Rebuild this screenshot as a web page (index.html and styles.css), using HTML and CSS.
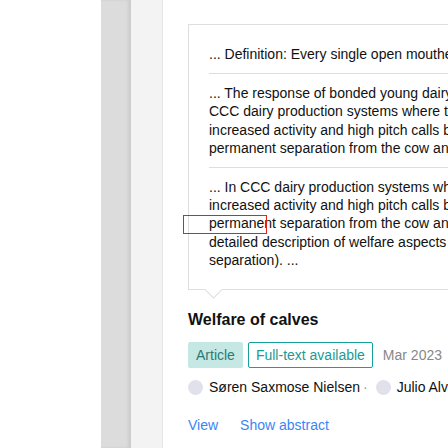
FILE: index.html
```html
<!DOCTYPE html>
<html>
<head>
<meta charset="utf-8">
<link rel="stylesheet" href="styles.css">
</head>
<body>
<div class="page">
  <div class="blank"></div>
  <div class="rail"></div>
  <div class="side"></div>
  <main class="main">
    <div class="card">
      <div class="snippet">... Definition: Every single open mouthed vocalization</div>
      <div class="snippet">... The response of bonded young dairy calves to separation in<br>CCC dairy production systems where the calf shows<br>increased activity and high pitch calls before and after<br>permanent separation from the cow and herd mates ...</div>
      <div class="snippet">... In CCC dairy production systems where the calf shows<br>increased activity and high pitch calls before and after<br>permanent separation from the cow and herd mates (see<br>detailed description of welfare aspects of the cow-calf<br>separation). ...</div>
      <span class="mark"></span>
    </div>
    <h3 class="title">Welfare of calves</h3>
    <div class="meta">
      <span class="badge badge-type">Article</span>
      <span class="badge badge-ft">Full-text available</span>
      <span class="date">Mar 2023</span>
    </div>
    <div class="authors">
      <span class="avatar"></span><span class="name">Søren Saxmose Nielsen</span><span class="sep">·</span><span class="avatar"></span><span class="name">Julio Alvarez</span>
    </div>
    <div class="actions">
      <a class="link">View</a>
      <a class="link">Show abstract</a>
    </div>
  </main>
</div>
</body>
</html>
```

FILE: styles.css
```css
html, body {
  margin: 0;
  padding: 0;
  background: #fff;
  overflow: hidden;
}
body {
  width: 448px;
  height: 448px;
  font-family: Arial, "Liberation Sans", sans-serif;
}
.page {
  display: flex;
  height: 448px;
}
.blank {
  width: 101px;
  flex: none;
}
.rail {
  width: 30px;
  flex: none;
  background: #dcdcdc;
  box-shadow: inset -3px 0 3px rgba(0, 0, 0, 0.07);
}
.side {
  width: 31px;
  flex: none;
  background: #f3f3f3;
  border-right: 1px solid #e4e4e4;
}
.main {
  flex: none;
  width: 400px;
  padding: 24px 0 0 25px;
}
.card {
  position: relative;
  border: 1px solid #dedede;
  border-right: none;
  padding: 10px 0 10px 20px;
  font-size: 14px;
  line-height: 18.2px;
  color: #111;
  white-space: nowrap;
}
.card::after {
  content: "";
  position: absolute;
  left: 18px;
  bottom: -7px;
  width: 12px;
  height: 12px;
  background: #fff;
  border-right: 1px solid #dedede;
  border-bottom: 1px solid #dedede;
  transform: rotate(45deg);
}
.snippet {
  padding: 10px 0;
  border-bottom: 1px solid #dedede;
}
.snippet:last-of-type {
  border-bottom: none;
}
.mark {
  position: absolute;
  left: -6px;
  top: 190px;
  width: 82px;
  height: 17px;
  border: 1px solid #e2231a;
}
.title {
  margin: 20px 0 0;
  font-size: 16px;
  line-height: 20px;
  font-weight: bold;
  color: #111;
}
.meta {
  display: flex;
  align-items: center;
  gap: 5px;
  margin-top: 12px;
  font-size: 14px;
}
.badge {
  height: 26px;
  line-height: 24px;
  padding: 0 7px;
  border-radius: 2px;
  box-sizing: border-box;
}
.badge-type {
  background: #c6e8e4;
  color: #2b7a75;
  border: 1px solid #c6e8e4;
}
.badge-ft {
  border: 1px solid #14a19c;
  color: #1a9a95;
  background: #fff;
}
.date {
  margin-left: 5px;
  color: #888;
}
.authors {
  display: flex;
  align-items: center;
  margin-top: 11px;
  font-size: 14px;
  color: #111;
  white-space: nowrap;
}
.avatar {
  width: 15px;
  height: 15px;
  border-radius: 50%;
  background: #e1e1ec;
  margin-right: 6px;
  flex: none;
}
.sep {
  color: #999;
  margin: 0 8px 0 3px;
}
.actions {
  display: flex;
  gap: 22px;
  margin-top: 22px;
  font-size: 14px;
}
.link {
  color: #3b85f5;
  text-decoration: none;
}
```
